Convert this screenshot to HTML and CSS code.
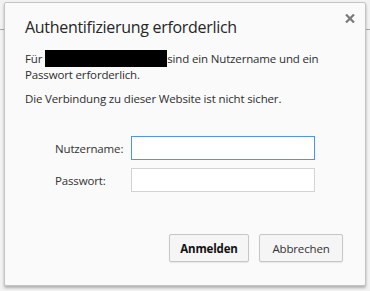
FILE: index.html
```html
<!DOCTYPE html>
<html lang="de">
<head>
<meta charset="utf-8">
<title>Authentifizierung erforderlich</title>
<link rel="stylesheet" href="styles.css">
</head>
<body>
<div class="dialog">
  <button class="close" aria-label="Schließen">
    <svg width="10" height="9" viewBox="0 0 10 9"><path d="M1 0.5 L9 8.5 M9 0.5 L1 8.5" stroke="#7a7a7a" stroke-width="2.2" fill="none"/></svg>
  </button>
  <h1 class="title">Authentifizierung erforderlich</h1>
  <p class="text">Für<span class="redacted"></span>sind ein Nutzername und ein<br>Passwort erforderlich.</p>
  <p class="text second">Die Verbindung zu dieser Website ist nicht sicher.</p>
  <div class="form">
    <div class="row">
      <label class="label" for="user">Nutzername:</label>
      <input class="field focused" id="user" type="text">
    </div>
    <div class="row">
      <label class="label" for="pass">Passwort:</label>
      <input class="field" id="pass" type="password">
    </div>
  </div>
  <div class="buttons">
    <button class="btn primary">Anmelden</button>
    <button class="btn cancel">Abbrechen</button>
  </div>
</div>
</body>
</html>
```
FILE: styles.css
```css
html, body {
  margin: 0;
  padding: 0;
}
body {
  width: 370px;
  height: 291px;
  overflow: hidden;
  background: linear-gradient(to bottom, #f2f2f2 0, #f2f2f2 29px, #a9a9a9 29px, #a9a9a9 30px, #f2f2f2 30px);
  font-family: "Segoe UI", "Open Sans", sans-serif;
  color: #333;
}
.dialog {
  position: relative;
  box-sizing: border-box;
  width: 362px;
  height: 284px;
  margin: 2px 0 0 4px;
  padding: 14px 22px 23px 20px;
  background: #fafafa;
  border: 1px solid #c4c4c4;
  border-radius: 2px;
  box-shadow: 0 2px 3px rgba(0,0,0,0.28);
  display: flex;
  flex-direction: column;
}
.close {
  position: absolute;
  top: 10px;
  right: 9px;
  width: 12px;
  height: 11px;
  padding: 1px;
  border: 0;
  background: transparent;
  display: flex;
}
.title {
  margin: 0;
  font-size: 16px;
  line-height: 20px;
  font-weight: 400;
  color: #262626;
  letter-spacing: -0.3px;
}
.text {
  margin: 14px 0 0;
  font-size: 11.5px;
  line-height: 15px;
  color: #2e2e2e;
  letter-spacing: -0.15px;
}
.text.second {
  margin-top: 9px;
}
.redacted {
  display: inline-block;
  width: 122px;
  height: 16px;
  margin-left: 3px;
  background: #000;
  vertical-align: -4px;
  box-shadow: 0 -1px 0 #000;
}
.form {
  margin-top: 30px;
  padding-left: 30px;
  display: flex;
  flex-direction: column;
  gap: 8px;
}
.row {
  display: flex;
  align-items: center;
}
.label {
  width: 76px;
  font-size: 11.5px;
  color: #333;
  letter-spacing: -0.15px;
}
.field {
  box-sizing: border-box;
  width: 184px;
  height: 24px;
  margin: 0;
  padding: 0 4px;
  border: 1px solid #d3d3d3;
  background: #fff;
  outline: none;
}
.field.focused {
  border-color: #4d90fe;
}
.buttons {
  margin-top: auto;
  display: flex;
  justify-content: flex-end;
  gap: 10px;
}
.btn {
  box-sizing: border-box;
  height: 28px;
  margin: 0;
  padding: 0;
  border: 1px solid #c6c6c6;
  border-radius: 2px;
  background: #f5f5f5;
  box-shadow: 0 1px 1px rgba(0,0,0,0.08);
  font-family: "Segoe UI", "Open Sans", sans-serif;
  font-size: 11.5px;
  color: #333;
  letter-spacing: -0.15px;
}
.btn.primary {
  width: 80px;
  font-weight: 700;
  color: #111;
}
.btn.cancel {
  width: 84px;
}
```
